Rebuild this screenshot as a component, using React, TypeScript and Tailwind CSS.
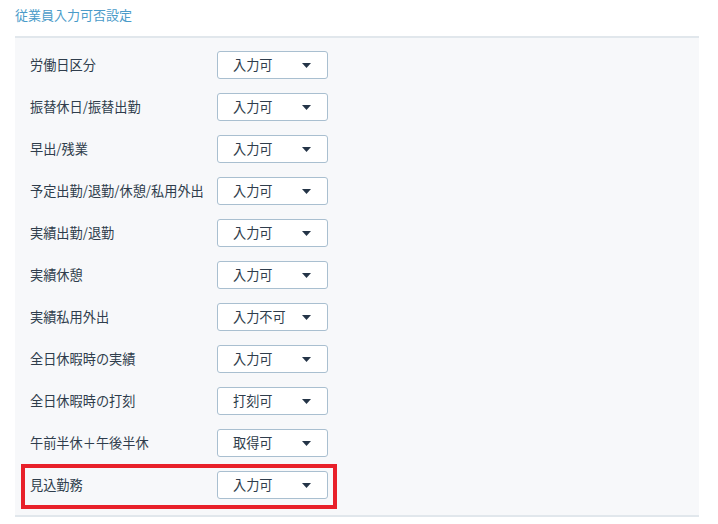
import React from "react";

const rows: [string, string][] = [
  ["労働日区分", "入力可"],
  ["振替休日/振替出勤", "入力可"],
  ["早出/残業", "入力可"],
  ["予定出勤/退勤/休憩/私用外出", "入力可"],
  ["実績出勤/退勤", "入力可"],
  ["実績休憩", "入力可"],
  ["実績私用外出", "入力不可"],
  ["全日休暇時の実績", "入力可"],
  ["全日休暇時の打刻", "打刻可"],
  ["午前半休＋午後半休", "取得可"],
  ["見込勤務", "入力可"],
];

export default function App() {
  return (
    <div
      className="w-[718px] h-[524px] bg-white overflow-hidden"
      style={{ fontFamily: '"Noto Sans CJK JP", "Noto Sans", sans-serif' }}
    >
      <div className="pl-[15px] pt-[6px] h-[36px] text-[13px] leading-[18px] text-[#4a9bc9]">
        従業員入力可否設定
      </div>
      <div className="relative ml-[15px] w-[684px] border-t-2 border-b-2 border-[#e1e7ec] bg-[#f7f8fa] pt-[6px] pb-[9px]">
        {rows.map(([label, value], i) => (
          <div key={i} className="flex h-[42px] items-center pl-[15px]">
            <div className="w-[187px] text-[13.2px] text-[#2f3d4c] whitespace-nowrap">{label}</div>
            <div className="flex h-[28px] w-[111px] items-center justify-between rounded-[3px] border border-[#a9bfd0] bg-white pl-[15px] pr-[16px]">
              <span className="text-[13.2px] text-[#2f3d4c]">{value}</span>
              <svg width="9" height="5" viewBox="0 0 9 5">
                <path d="M0 0 L9 0 L4.5 5 Z" fill="#243447" />
              </svg>
            </div>
          </div>
        ))}
        <div className="absolute left-[6px] top-[426px] h-[45px] w-[316px] border-4 border-[#e8202a]" />
      </div>
    </div>
  );
}
